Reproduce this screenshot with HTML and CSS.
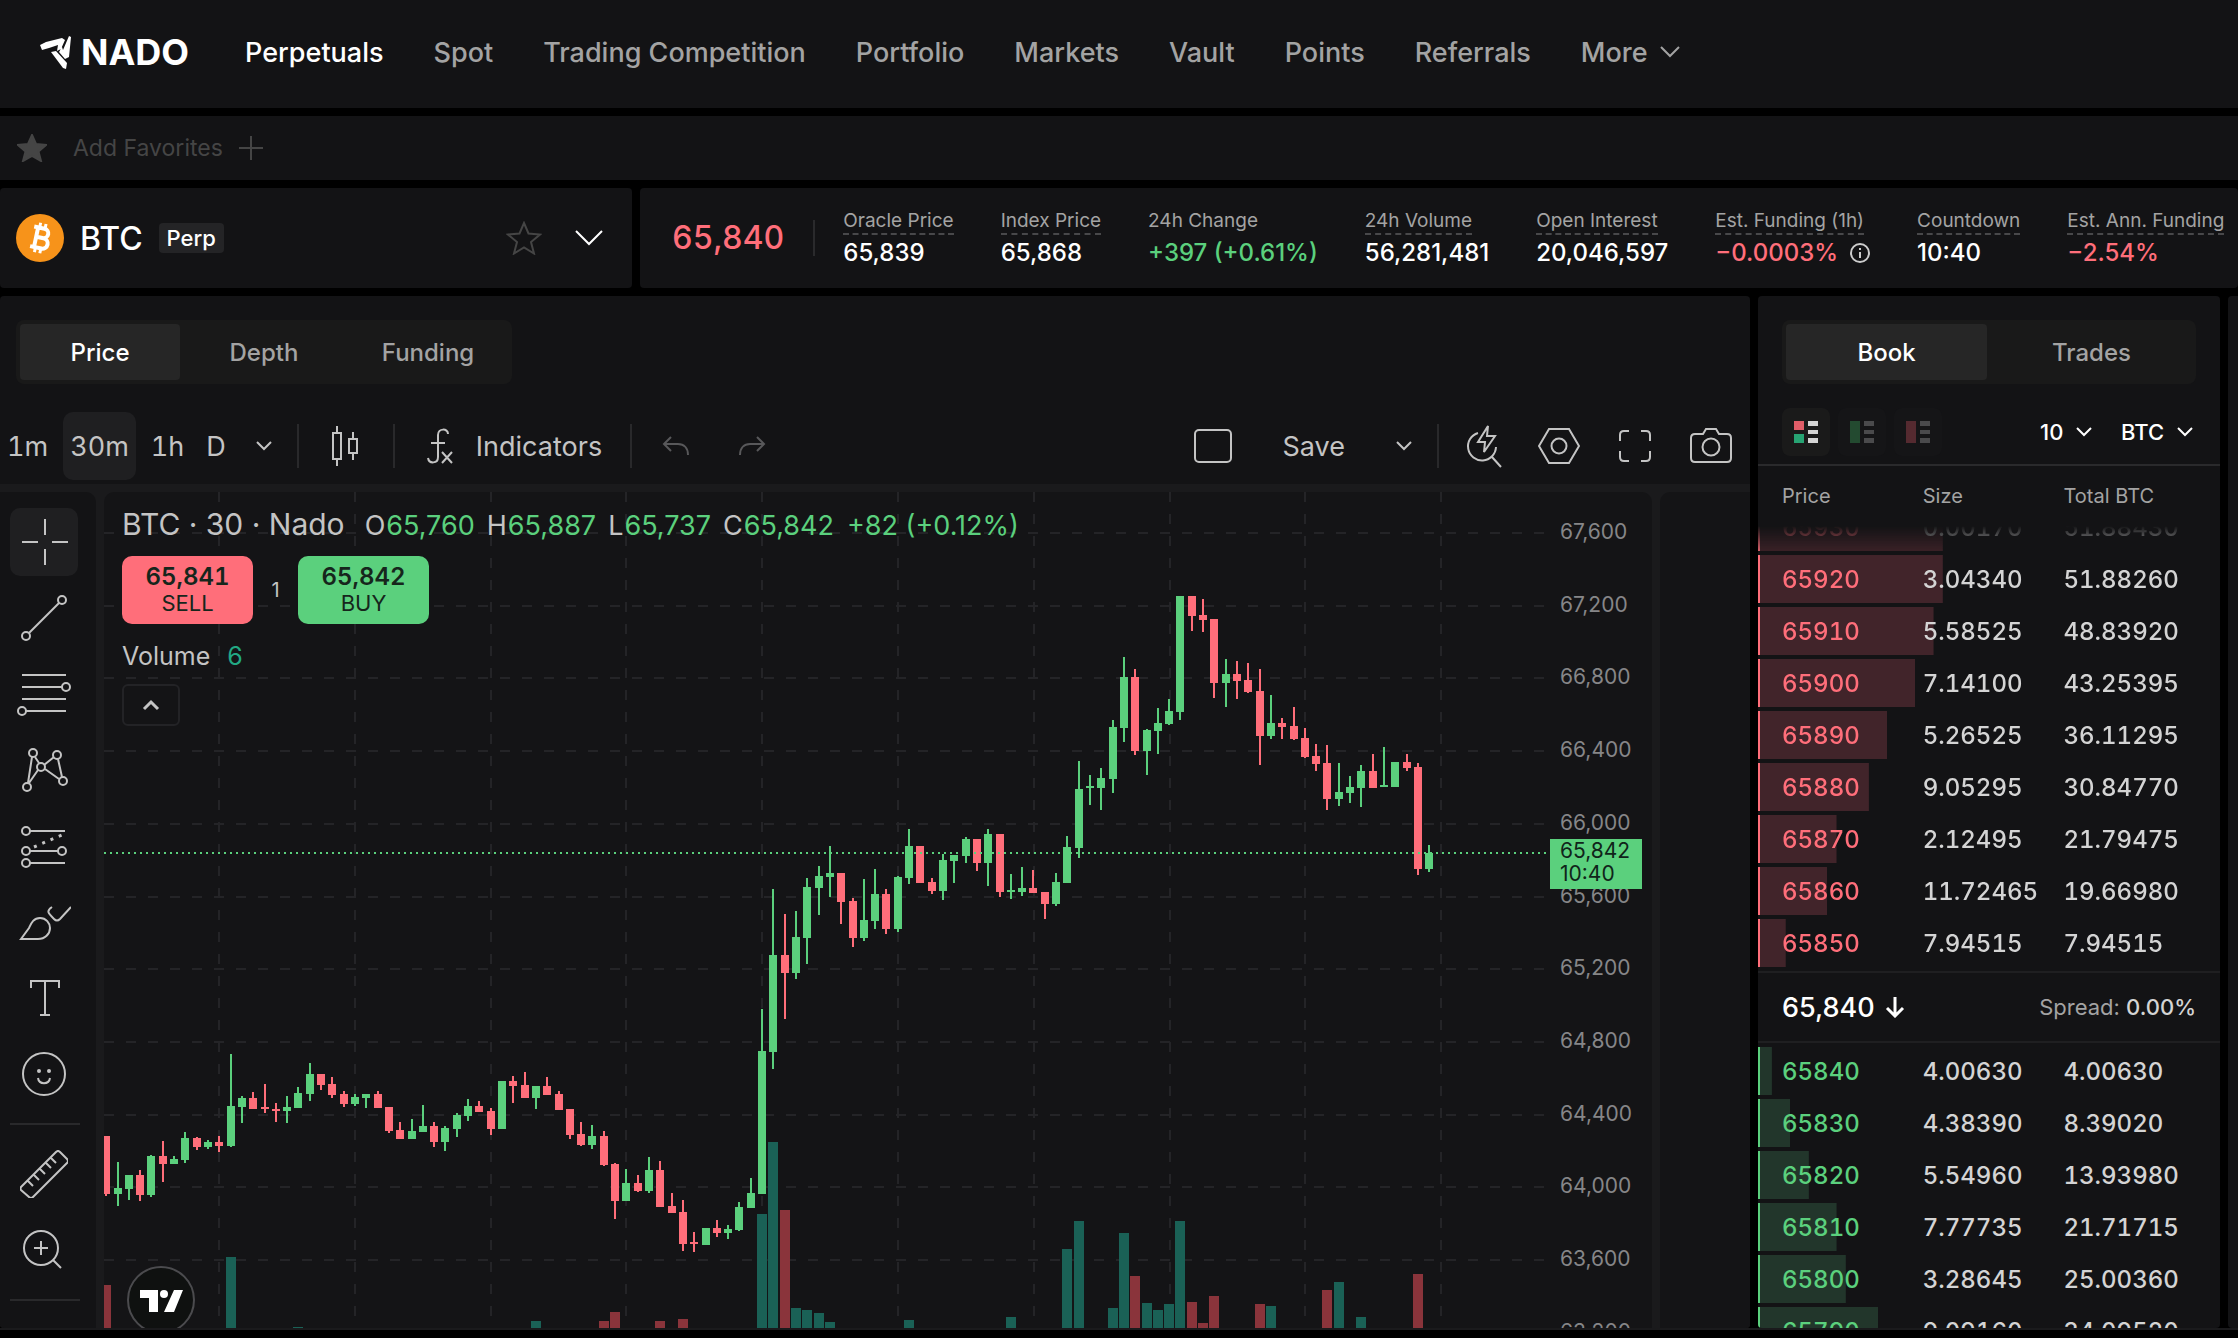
FILE: index.html
```html
<!DOCTYPE html>
<html lang="en">
<head>
  <meta charset="utf-8">
  <title>65,840 BTC-Perp | Nado</title>
  <link rel="stylesheet" href="styles.css">
</head>
<body>
  <header class="topbar">
    <a class="logo" href="#">
      <svg width="32" height="34" viewBox="0 0 32 34" fill="#fff"><path d="M0 10 6 7l16-4 3 2-4 9-4 2 1-6-9 3-7 2zM29 1l2 1-2 20-4 2-6-7 3-5 1 3zM11 17l5-1 11 12-1 6-3-1z"/></svg>
      <span>NADO</span>
    </a>
    <nav class="nav">
      <a class="active" href="#">Perpetuals</a>
      <a href="#">Spot</a>
      <a href="#">Trading Competition</a>
      <a href="#">Portfolio</a>
      <a href="#">Markets</a>
      <a href="#">Vault</a>
      <a href="#">Points</a>
      <a href="#">Referrals</a>
      <a href="#">More <svg width="20" height="12" viewBox="0 0 20 12"><path d="M1 1l9 9 9-9"/></svg></a>
    </nav>
  </header>

  <div class="favorites">
    <svg class="fav-star" width="30" height="28" viewBox="0 0 30 28"><path d="M15 1l4 9 10 1-7.500 6.500L24 27l-9-5-9 5 2.500-9.500L1 11l10-1z"/></svg>
    <button class="add-fav">Add Favorites <svg width="24" height="24" viewBox="0 0 24 24"><path d="M12 0v24M0 12h24"/></svg></button>
  </div>

  <section class="market">
    <div class="panel pair">
      <svg width="48" height="48" viewBox="0 0 48 48">
        <circle cx="24" cy="24" r="24" fill="#f7931a" stroke="none"/>
        <g transform="rotate(12 24 24)" fill="none" stroke="#fff" stroke-width="4"><path d="M16 14h10.500a4.500 4.500 0 0 1 0 9.500H20h7.500a5 5 0 0 1 0 10.500H16M20 14v20"/><path d="M21.500 9v5M27 9v5M21.500 34v5M27 34v5" stroke-width="3"/></g>
      </svg>
      <h1>BTC</h1>
      <span class="tag">Perp</span>
      <button class="icon-btn star" aria-label="Favorite"><svg width="36" height="34" viewBox="0 0 36 34"><path d="M18 2l4.500 10.500L34 13.500l-9 7.500 3 11.500-10-6-10 6 3-11.500-9-7.500 11.500-1z"/></svg></button>
      <button class="icon-btn" aria-label="Select market"><svg width="30" height="16" viewBox="0 0 30 16"><path d="M2 1l13 13L28 1" stroke="#fff"/></svg></button>
    </div>
    <div class="panel stats">
      <strong class="last red">65,840</strong>
      <dl>
        <div><dt><span>Oracle Price</span></dt><dd>65,839</dd></div>
        <div><dt><span>Index Price</span></dt><dd>65,868</dd></div>
        <div><dt>24h Change</dt><dd class="green">+397 (+0.61%)</dd></div>
        <div><dt><span>24h Volume</span></dt><dd>56,281,481</dd></div>
        <div><dt><span>Open Interest</span></dt><dd>20,046,597</dd></div>
        <div><dt><span>Est. Funding (1h)</span></dt><dd class="red">−0.0003% <svg width="20" height="20" viewBox="0 0 20 20"><circle cx="10" cy="10" r="9"/><path d="M10 9v6M10 5v2"/></svg></dd></div>
        <div><dt><span>Countdown</span></dt><dd>10:40</dd></div>
        <div><dt><span>Est. Ann. Funding</span></dt><dd class="red">−2.54%</dd></div>
      </dl>
    </div>
  </section>

  <main class="workspace">
    <section class="panel chart-panel">
      <div class="tabs chart-tabs">
        <button class="active">Price</button>
        <button>Depth</button>
        <button>Funding</button>
      </div>

      <div class="toolbar">
        <button class="interval">1m</button>
        <button class="interval active">30m</button>
        <button class="interval">1h</button>
        <button class="interval">D</button>
        <button class="arrow" aria-label="Intervals"><svg width="16" height="10" viewBox="0 0 16 10"><path d="M1 1l7 7 7-7"/></svg></button>
        <i class="sep"></i>
        <button class="candles" aria-label="Candles"><svg width="30" height="40" viewBox="0 0 30 40"><path d="M2 7h8v26H2zM6 0v7M6 33v7M18 13h8v14h-8zM22 6v7M22 27v7"/></svg></button>
        <i class="sep"></i>
        <button class="indicators"><svg width="30" height="36" viewBox="0 0 30 36"><path d="M23 6c0-6-10-6-10 1v22c0 7-9 7-10 1M6 15h14M17 24l10 11M27 24L17 35"/></svg>Indicators</button>
        <i class="sep"></i>
        <button class="tool dim" aria-label="Undo"><svg width="28" height="20" viewBox="0 0 28 20"><path d="M9 1L2 8l7 7M2 8h14c6 0 10 4 10 11"/></svg></button>
        <button class="tool dim" aria-label="Redo"><svg width="28" height="20" viewBox="0 0 28 20"><path d="M19 1l7 7-7 7M26 8H12C6 8 2 12 2 19"/></svg></button>
        <div class="toolbar-right">
          <button class="tool" aria-label="Layout"><svg width="40" height="36" viewBox="0 0 40 36"><rect x="2" y="2" width="36" height="32" rx="4"/></svg></button>
          <button class="save">Save</button>
          <button class="arrow" aria-label="Save menu"><svg width="16" height="10" viewBox="0 0 16 10"><path d="M1 1l7 7 7-7"/></svg></button>
          <i class="sep"></i>
          <button class="tool" aria-label="Quick search"><svg width="38" height="44" viewBox="0 0 38 44"><path d="M14 9a14 14 0 1 0 18 14M28 33l9 10M24 2L14 18h7l-1 10 11-16h-8z"/></svg></button>
          <button class="tool" aria-label="Settings"><svg width="42" height="38" viewBox="0 0 42 38"><path d="M11 2h20l10 17-10 17H11L1 19z"/><circle cx="21" cy="19" r="7.500"/></svg></button>
          <button class="tool" aria-label="Fullscreen"><svg width="34" height="34" viewBox="0 0 34 34"><path d="M2 12V6q0-4 4-4h5M23 2h5q4 0 4 4v6M32 22v6q0 4-4 4h-5M11 32H6q-4 0-4-4v-6"/></svg></button>
          <button class="tool" aria-label="Snapshot"><svg width="44" height="38" viewBox="0 0 44 38"><path d="M6 7h8l3-5h10l3 5h8q4 0 4 4v20q0 4-4 4H6q-4 0-4-4V11q0-4 4-4z"/><circle cx="22" cy="20" r="8.500"/></svg></button>
        </div>
      </div>

      <div class="chart-grid">
        <div class="draw-tools">
          <button class="tool active" aria-label="Cross"><svg width="48" height="48" viewBox="0 0 48 48"><path d="M25 1v16M25 31v16M2 24h16M32 24h16"/></svg></button>
          <button class="tool" aria-label="Trend line"><svg width="48" height="48" viewBox="0 0 48 48"><path d="M9 39L39 9"/><circle cx="6" cy="42" r="4"/><circle cx="42" cy="6" r="4"/></svg></button>
          <button class="tool" aria-label="Fib retracement"><svg width="54" height="48" viewBox="0 0 54 48"><path d="M5 5h44M5 17h40M5 29h44M9 41h40"/><circle cx="49" cy="17" r="4"/><circle cx="5" cy="41" r="4"/></svg></button>
          <button class="tool" aria-label="Patterns"><svg width="48" height="48" viewBox="0 0 48 48"><circle cx="13" cy="7" r="4"/><circle cx="37" cy="9" r="4"/><circle cx="21" cy="21" r="4"/><circle cx="7" cy="41" r="4"/><circle cx="43" cy="35" r="4"/><path d="M12 11L8 37M15 11l4 6M34 11L24 19M38 13l4 18M25 23l14 10M18 24L9 37"/></svg></button>
          <button class="tool" aria-label="Forecasting"><svg width="48" height="48" viewBox="0 0 48 48"><circle cx="6" cy="9" r="4"/><circle cx="6" cy="29" r="4"/><circle cx="42" cy="29" r="4"/><circle cx="6" cy="41" r="4"/><path d="M10 9h35M10 29h28M10 41h35"/><path d="M14 25L44 12" stroke-width="3" stroke-dasharray="3 6"/></svg></button>
          <button class="tool" aria-label="Brush"><svg width="54" height="48" viewBox="0 0 54 48"><path d="M4 41l8-11c2-4 4-10 11-10 6 0 10 5 10 10 0 6-5 11-12 11zM35 9c-6 4-4 6 2 12 2 2 4 2 6 0L54 9"/></svg></button>
          <button class="tool" aria-label="Text"><svg width="48" height="48" viewBox="0 0 48 48"><path d="M11 14V7h28v7M25 7v34M20 41h10"/></svg></button>
          <button class="tool" aria-label="Icons"><svg width="48" height="48" viewBox="0 0 48 48"><circle cx="24" cy="24" r="21"/><path d="M18 28c1 7 11 7 12 0"/><circle class="dot" cx="19" cy="21" r="2"/><circle class="dot" cx="29" cy="21" r="2"/></svg></button>
          <i class="line"></i>
          <button class="tool" aria-label="Measure"><svg width="48" height="48" viewBox="0 0 48 48"><path d="M1 37L36 2q2-2 4 0l7 7q2 2 0 4L13 47q-2 2-4 0l-8-7q-1-1 0-3zM8 31l5 5M14 25l5 5M20 19l5 5M26 13l5 5M31 8l5 5"/></svg></button>
          <button class="tool" aria-label="Zoom in"><svg width="48" height="48" viewBox="0 0 48 48"><circle cx="21" cy="22" r="17"/><path d="M14 22h14M21 15v14M33 34l8 8"/></svg></button>
          <i class="line"></i>
        </div>

        <div class="plot">
          <svg id="plot" class="plot-canvas"></svg>
          <svg id="axis" class="plot-axis"></svg>
          <div class="legend">
            <div class="legend-row">
              <h2>BTC · 30 · Nado</h2>
              <p>O<b>65,760</b></p><p>H<b>65,887</b></p><p>L<b>65,737</b></p><p>C<b>65,842</b></p><p><b>+82 (+0.12%)</b></p>
            </div>
            <div class="quick-trade">
              <button class="sell"><b>65,841</b>SELL</button>
              <span>1</span>
              <button class="buy"><b>65,842</b>BUY</button>
            </div>
            <p class="volume">Volume <b>6</b></p>
            <button class="collapse" aria-label="Collapse"><svg width="18" height="12" viewBox="0 0 18 12"><path d="M2 10l7-7 7 7"/></svg></button>
          </div>
          <svg class="tv" width="70" height="70" viewBox="0 0 70 70"><circle cx="35" cy="35" r="33"/><path d="M14 25h18v22h-9V33h-9zM48 25h9l-9 22H38z"/><circle class="dot" cx="38" cy="29" r="4"/></svg>
        </div>
        <div class="side"></div>
      </div>
    </section>

    <section class="panel book">
      <div class="tabs">
        <button class="active">Book</button>
        <button>Trades</button>
      </div>
      <div class="book-controls">
        <button class="view active" aria-label="Both sides"><svg width="24" height="24" viewBox="0 0 24 24"><path d="M0 1h10v9H0z" fill="#e05d68"/><path d="M0 14h10v9H0z" fill="#27a373"/><path class="bars" d="M14 1h10v5H14zM14 10h10v4H14zM14 18h10v5H14z"/></svg></button>
        <button class="view" aria-label="Bids"><svg width="24" height="24" viewBox="0 0 24 24"><path d="M0 1h10v22H0z" fill="#234a30"/><path class="bars" d="M14 1h10v5H14zM14 10h10v4H14zM14 18h10v5H14z"/></svg></button>
        <button class="view" aria-label="Asks"><svg width="24" height="24" viewBox="0 0 24 24"><path d="M0 1h10v22H0z" fill="#552a30"/><path class="bars" d="M14 1h10v5H14zM14 10h10v4H14zM14 18h10v5H14z"/></svg></button>
        <label class="pick step"><select aria-label="Price step"><option>10</option></select><svg width="16" height="10" viewBox="0 0 16 10"><path d="M1 1l7 7 7-7"/></svg></label>
        <label class="pick"><select aria-label="Unit"><option>BTC</option></select><svg width="16" height="10" viewBox="0 0 16 10"><path d="M1 1l7 7 7-7"/></svg></label>
      </div>
      <table>
        <thead><tr><th>Price</th><th>Size</th><th>Total BTC</th></tr></thead>
        <tbody class="asks">
          <tr style="--depth:40%"><td>65930</td><td>0.00170</td><td>51.88430</td></tr>
          <tr style="--depth:40%"><td>65920</td><td>3.04340</td><td>51.88260</td></tr>
          <tr style="--depth:38%"><td>65910</td><td>5.58525</td><td>48.83920</td></tr>
          <tr style="--depth:34%"><td>65900</td><td>7.14100</td><td>43.25395</td></tr>
          <tr style="--depth:28%"><td>65890</td><td>5.26525</td><td>36.11295</td></tr>
          <tr style="--depth:24%"><td>65880</td><td>9.05295</td><td>30.84770</td></tr>
          <tr style="--depth:17%"><td>65870</td><td>2.12495</td><td>21.79475</td></tr>
          <tr style="--depth:15%"><td>65860</td><td>11.72465</td><td>19.66980</td></tr>
          <tr style="--depth:6%"><td>65850</td><td>7.94515</td><td>7.94515</td></tr>
        </tbody>
        <tbody class="spread">
          <tr><td>65,840 <svg width="20" height="22" viewBox="0 0 20 22"><path d="M10 1v19M2 12l8 8 8-8"/></svg></td><td>Spread: <b>0.00%</b></td></tr>
        </tbody>
        <tbody class="bids">
          <tr style="--depth:3%"><td>65840</td><td>4.00630</td><td>4.00630</td></tr>
          <tr style="--depth:7%"><td>65830</td><td>4.38390</td><td>8.39020</td></tr>
          <tr style="--depth:11%"><td>65820</td><td>5.54960</td><td>13.93980</td></tr>
          <tr style="--depth:17%"><td>65810</td><td>7.77735</td><td>21.71715</td></tr>
          <tr style="--depth:19%"><td>65800</td><td>3.28645</td><td>25.00360</td></tr>
          <tr style="--depth:26%"><td>65790</td><td>9.09160</td><td>34.09520</td></tr>
        </tbody>
      </table>
    </section>
    <aside class="panel order"></aside>
  </main>
  <script src="chart.js"></script>
</body>
</html>
```
FILE: styles.css
```css
* {
  box-sizing: border-box;
}

body {
  margin: 0;
  height: 100vh;
  display: flex;
  flex-direction: column;
  gap: 8px;
  padding-bottom: 8px;
  overflow: hidden;
  background: #000;
  color: #fff;
  font-family: Inter, "Liberation Sans", sans-serif;
  font-size: 24px;
}

h1, h2, p, dl, dd {
  margin: 0;
  font-weight: 400;
}

a {
  color: inherit;
  text-decoration: none;
}

button, select {
  border: none;
  padding: 0;
  background: none;
  color: inherit;
  font: inherit;
  cursor: pointer;
}

svg {
  flex: none;
  fill: none;
  stroke: currentColor;
  stroke-width: 2;
}

.panel {
  background: #131315;
  border-radius: 4px;
}

.red {
  color: #ff6e7a;
}

.green {
  color: #5bd07d;
}

/* Header */
.topbar {
  display: flex;
  align-items: center;
  gap: 56px;
  height: 108px;
  padding: 0 40px 4px;
  background: #131315;
}

.logo {
  display: flex;
  align-items: center;
  gap: 9px;
  font-size: 36px;
  font-weight: 700;
}

.logo svg {
  fill: #fff;
  stroke: none;
}

.nav {
  display: flex;
  gap: 50px;
  font-size: 27px;
  font-weight: 500;
  color: #a3a3a3;
}

.nav a {
  display: flex;
  align-items: center;
  gap: 12px;
}

.nav .active {
  color: #fff;
}

.favorites {
  display: flex;
  align-items: center;
  gap: 26px;
  height: 64px;
  padding: 0 17px;
  background: #131315;
  color: #454545;
}

.fav-star {
  fill: #454545;
}

.add-fav {
  display: flex;
  align-items: center;
  gap: 16px;
  font-size: 23px;
}

/* Market summary */
.market {
  display: flex;
  gap: 8px;
  height: 100px;
}

.pair {
  display: flex;
  align-items: center;
  gap: 16px;
  width: 632px;
  padding: 0 28px 0 16px;
}

.pair h1 {
  font-size: 32px;
  font-weight: 500;
}

.tag {
  padding: 0 8px;
  border-radius: 4px;
  background: #242426;
  font-size: 22px;
  font-weight: 500;
  line-height: 30px;
}

.icon-btn {
  display: flex;
}

.icon-btn.star {
  margin-left: auto;
  margin-right: 16px;
  color: #454545;
}

.stats {
  flex: 1;
  display: flex;
  align-items: center;
  padding-left: 32px;
  overflow: hidden;
  white-space: nowrap;
}

.last {
  padding-right: 29px;
  border-right: 2px solid #2a2a2c;
  font-size: 32px;
  font-weight: 500;
  font-variant-numeric: tabular-nums;
  line-height: 36px;
}

.stats dl {
  display: flex;
  gap: 47px;
  padding-left: 28px;
}

.stats dt {
  height: 26px;
  margin-bottom: 4px;
  font-size: 19px;
  line-height: 24px;
  color: #a3a3a3;
}

.stats dt span {
  display: block;
  width: max-content;
  border-bottom: 2px dashed #48484a;
}

.stats dd {
  display: flex;
  align-items: center;
  gap: 12px;
  font-weight: 500;
  line-height: 28px;
}

.stats dd svg {
  color: #ccc;
}

/* Workspace */
.workspace {
  flex: 1;
  min-height: 0;
  display: flex;
  gap: 8px;
  border-bottom: 2px solid #1a1a1c;
}

.chart-panel {
  flex: 1;
  min-width: 0;
  display: flex;
  flex-direction: column;
  overflow: hidden;
}

.tabs {
  display: flex;
  gap: 4px;
  height: 64px;
  padding: 4px;
  border-radius: 8px;
  background: #191919;
  font-weight: 500;
  color: #a3a3a3;
}

.tabs button {
  flex: 1;
  border-radius: 4px;
}

.tabs .active {
  background: #262626;
  color: #fff;
}

.chart-tabs {
  width: 496px;
  flex: none;
  margin: 24px 16px 28px;
}

.toolbar {
  display: flex;
  align-items: center;
  gap: 8px;
  flex: none;
  height: 72px;
  padding: 0 5px 4px 0;
  font-size: 27px;
  font-variant-numeric: tabular-nums;
  color: #c4c4c4;
}

.toolbar button {
  display: flex;
  align-items: center;
  justify-content: center;
  height: 68px;
  border-radius: 10px;
}

.toolbar .interval {
  padding: 0 7px;
}

.toolbar .active {
  background: #1f1f21;
}

.toolbar .arrow {
  width: 46px;
}

.toolbar .candles {
  width: 74px;
}

.toolbar .indicators {
  gap: 21px;
  padding: 0 18px 0 20px;
}

.toolbar .save {
  padding: 0 28px;
}

.toolbar .dim {
  color: #58585a;
}

.sep {
  width: 2px;
  height: 44px;
  margin: 0 2px;
  background: #29292b;
}

.tool {
  width: 68px;
  height: 68px;
}

.toolbar-right {
  display: flex;
  align-items: center;
  gap: 8px;
  margin-left: auto;
}

.chart-grid {
  flex: 1;
  min-height: 0;
  display: flex;
  gap: 8px;
  padding-top: 8px;
  background: #1a1a1c;
}

.draw-tools {
  display: flex;
  flex-direction: column;
  gap: 8px;
  width: 96px;
  padding: 16px 10px;
  border-top-right-radius: 10px;
  background: #131315;
  color: #c4c4c4;
}

.draw-tools .tool {
  display: flex;
  flex: none;
  align-items: center;
  justify-content: center;
  border-radius: 10px;
}

.draw-tools .active {
  background: #1f1f21;
}

.draw-tools .line {
  flex: none;
  width: 70px;
  height: 2px;
  margin: 7px 0;
  background: #29292b;
}

.dot {
  fill: currentColor;
  stroke: none;
}

.plot {
  position: relative;
  flex: 1;
  min-width: 0;
  display: flex;
  overflow: hidden;
  border-radius: 10px 10px 0 0;
  background: #141416;
}

.plot-canvas {
  flex: 1;
  min-width: 0;
  height: 100%;
  stroke: none;
}

.plot-axis {
  width: 106px;
  height: 100%;
  stroke: none;
  font-size: 21px;
}

.side {
  width: 90px;
  border-top-left-radius: 10px;
  background: #141416;
}

.grid-line {
  stroke: #242427;
  stroke-dasharray: 10 12;
}

.last-line {
  stroke: #5bd07d;
  stroke-dasharray: 2 4;
}

.up {
  fill: #5bd07d;
}

.down {
  fill: #ff6e7a;
}

.vol-up {
  fill: #1a6156;
}

.vol-down {
  fill: #8a343b;
}

.axis-label {
  fill: #868688;
}

.axis-last {
  fill: #10241a;
}

/* Legend sits over the plot */
.legend {
  position: absolute;
  top: 12px;
  left: 18px;
  color: #c4c4c4;
}

.legend b {
  font-weight: 400;
  color: #5bd07d;
}

.legend-row {
  display: flex;
  align-items: baseline;
  gap: 12px;
  height: 52px;
  font-size: 27px;
}

.legend h2 {
  margin-right: 8px;
  font-size: 30px;
  line-height: 40px;
}

.legend-row b {
  margin-left: 1px;
}

.quick-trade {
  display: flex;
  align-items: center;
  font-size: 20px;
}

.quick-trade span {
  width: 45px;
  text-align: center;
}

.quick-trade button {
  width: 131px;
  height: 68px;
  border-radius: 10px;
  color: #16261c;
  font-size: 22px;
  line-height: 27px;
}

.quick-trade .sell {
  background: #ff6e7a;
}

.quick-trade .buy {
  background: #5bd07d;
}

.quick-trade b {
  display: block;
  color: inherit;
  font-size: 24px;
  font-weight: 600;
  font-variant-numeric: tabular-nums;
}

.legend .volume {
  margin: 17px 0 13px;
  font-size: 25px;
  line-height: 30px;
}

.legend .volume b {
  margin-left: 10px;
  color: #22a884;
}

.collapse {
  display: flex;
  align-items: center;
  justify-content: center;
  width: 58px;
  height: 42px;
  border: 2px solid #232326;
  border-radius: 6px;
}

.collapse svg {
  stroke-width: 3;
}

.tv {
  position: absolute;
  left: 22px;
  bottom: -7px;
  fill: #fff;
  stroke: none;
  color: #fff;
}

.tv circle:first-child {
  fill: #0f1110;
  stroke: #4b4b4e;
}

/* Order book */
.book {
  width: 462px;
  display: flex;
  flex-direction: column;
  overflow: hidden;
}

.book .tabs {
  flex: none;
  margin: 24px;
}

.book-controls {
  display: flex;
  gap: 8px;
  flex: none;
  height: 58px;
  padding: 0 24px;
  border-bottom: 2px solid #2a2a2c;
}

.view {
  display: flex;
  align-items: center;
  justify-content: center;
  width: 48px;
  height: 48px;
  border-radius: 8px;
  background: #151517;
}

.view.active {
  background: #1a1a1a;
}

.view svg {
  stroke: none;
}

.bars {
  fill: #4a4a4c;
}

.view.active .bars {
  fill: #d4d4d4;
}

.pick {
  display: flex;
  align-items: center;
  gap: 12px;
  height: 48px;
  margin-left: 18px;
  padding-right: 3px;
}

.pick.step {
  margin-left: auto;
}

.pick select {
  appearance: none;
  font-size: 22px;
  font-weight: 500;
}

.book table {
  flex: 1;
  min-height: 0;
  display: flex;
  flex-direction: column;
}

.book tr {
  display: grid;
  grid-template-columns: 34% 34% 1fr;
  flex: none;
  align-items: center;
  height: 48px;
  padding: 0 24px;
}

.book thead tr {
  height: 60px;
}

.book th, .book td {
  padding: 0;
}

.book th {
  text-align: left;
  font-size: 20px;
  font-weight: 400;
  color: #a3a3a3;
}

.asks, .bids {
  display: flex;
  flex-direction: column;
  gap: 4px;
  overflow: hidden;
  font-weight: 500;
  font-variant-numeric: tabular-nums;
  color: #d4d4d4;
}

.asks {
  flex: none;
  height: 445px;
  justify-content: flex-end;
  padding-bottom: 4px;
  mask-image: linear-gradient(transparent, #000 30px);
}

.bids {
  flex: 1;
  padding-top: 4px;
}

.asks tr {
  background: linear-gradient(#ff6e7a, #ff6e7a) left / 2px 100% no-repeat,
    linear-gradient(#41242a, #41242a) left / var(--depth) 100% no-repeat;
}

.bids tr {
  background: linear-gradient(#5bd07d, #5bd07d) left / 2px 100% no-repeat,
    linear-gradient(#22362b, #22362b) left / var(--depth) 100% no-repeat;
}

.asks td:first-child {
  color: #ff6e7a;
}

.bids td:first-child {
  color: #5bd07d;
}

.book .spread tr {
  display: flex;
  justify-content: space-between;
  height: 72px;
  border-top: 2px solid #1f1f21;
  border-bottom: 2px solid #1f1f21;
  font-size: 22px;
  color: #a3a3a3;
}

.spread td:first-child {
  display: flex;
  align-items: center;
  gap: 10px;
  font-size: 27px;
  font-weight: 500;
  color: #fff;
}

.spread svg {
  stroke-width: 3;
}

.spread b {
  font-weight: 500;
  color: #d4d4d4;
}

.order {
  width: 10px;
  border-radius: 4px 0 0 4px;
}
```
FILE: chart.js
```js
// direction, high, body top, body bottom, low
const candles = [
  ['d',644,644,702,704],['u',670,696,702,714],['u',683,683,697,708],['d',678,683,703,709],['u',663,664,703,705],
  ['d',649,664,672,690],['u',664,667,672,672],['u',640,646,668,671],['d',645,646,655,658],['u',648,650,655,657],
  ['d',644,650,654,660],['u',562,614,654,655],['u',604,606,615,631],['d',600,606,617,617],['d',592,615,617,621],
  ['d',611,617,619,630],['u',604,615,619,631],['u',595,601,616,616],['u',571,582,602,609],['d',582,582,593,598],
  ['d',585,592,603,606],['d',599,602,612,615],['u',602,605,612,614],['u',602,602,606,616],['d',599,602,616,616],
  ['d',615,615,639,641],['d',630,638,647,647],['u',627,639,647,647],['u',613,634,640,640],['d',630,634,650,655],
  ['u',634,636,650,659],['u',621,623,637,645],['u',607,614,624,629],['d',609,614,620,620],['d',616,619,637,643],
  ['u',589,589,637,637],['d',584,589,594,611],['d',580,593,606,606],['u',594,594,606,617],['d',585,594,603,603],
  ['d',599,602,618,618],['d',617,617,643,647],['d',630,642,653,654],['u',633,644,653,657],['d',639,644,673,674],
  ['d',671,672,709,727],['u',677,691,709,709],['d',683,691,699,700],['u',665,678,699,701],['d',669,678,715,715],
  ['d',701,714,721,721],['d',708,720,752,759],['d',740,750,752,760],['u',736,736,753,753],['d',728,736,741,745],
  ['u',733,737,741,747],['u',710,715,738,739],['u',686,701,716,716],['u',517,559,702,702],['u',397,463,560,577],
  ['d',422,463,481,527],['u',419,445,481,487],['u',386,395,446,472],['u',374,384,396,423],['u',354,381,385,405],
  ['d',381,381,410,432],['d',406,409,446,455],['u',387,428,446,449],['u',377,402,429,437],['d',397,402,437,442],
  ['u',384,385,437,440],['u',337,354,386,392],['d',354,354,391,391],['d',386,390,399,402],['u',362,368,399,408],
  ['u',363,363,369,391],['u',345,347,364,371],['d',347,347,371,379],['u',337,342,371,394],['d',342,342,400,405],
  ['u',382,398,400,407],['u',375,396,400,404],['d',378,396,401,401],['d',400,400,412,427],['u',381,390,412,414],
  ['u',344,355,391,391],['u',269,297,356,366],['u',283,294,296,313],['u',276,286,296,318],['u',228,235,287,301],
  ['u',165,185,236,250],['d',177,185,259,263],['u',237,238,259,283],['u',216,231,239,262],['u',207,219,232,233],
  ['u',104,104,220,228],['d',104,104,124,139],['d',107,123,128,140],['d',127,127,191,206],['u',167,182,191,215],
  ['d',169,182,189,207],['d',171,188,200,201],['d',177,199,244,273],['u',203,231,244,247],['d',226,231,235,247],
  ['d',215,234,247,248],['d',236,246,265,266],['d',252,264,272,279],['d',253,271,307,318],['u',271,300,307,314],
  ['u',284,295,301,311],['u',273,279,296,315],['d',262,279,296,296],['u',255,293,295,295],['u',270,270,295,295],
  ['d',262,270,276,279],['d',271,275,377,383],['u',353,361,377,380]
];

// candle index: bar height
const volumes = {
  0: 43, 11: 71, 17: 1, 38: 7, 44: 7, 45: 16, 49: 7, 51: 9, 58: 114, 59: 186, 60: 118, 61: 20, 62: 18, 63: 15, 64: 6,
  71: 8, 80: 11, 85: 79, 86: 107, 89: 20, 90: 95, 91: 52, 92: 25, 93: 18, 94: 24, 95: 107, 96: 26, 97: 5, 98: 32,
  102: 24, 103: 22, 108: 38, 109: 46, 111: 11, 116: 54
};

const plot = document.getElementById('plot');
const axis = document.getElementById('axis');
const height = plot.clientHeight;
const step = 11.308;
const lastY = 361;

function rect(cls, x, y, w, h) {
  return `<rect class="${cls}" x="${x}" y="${y}" width="${w}" height="${h}"/>`;
}

let out = '';
let labels = '';

for (let i = 0; i < 12; i++) {
  const y = Math.round(41 + i * 72.7);
  const price = (67600 - i * 400).toLocaleString('en-US');
  if (y < height) out += `<line class="grid-line" x1="0" x2="100%" y1="${y}" y2="${y}"/>`;
  labels += `<text class="axis-label" x="14" y="${y + 6}">${price}</text>`;
}
for (let i = 0; i < 10; i++) {
  const x = Math.round(115 + i * 135.8);
  out += `<line class="grid-line" x1="${x}" x2="${x}" y1="0" y2="${height - 10}"/>`;
}

candles.forEach(([dir, high, top, bottom, low], i) => {
  const x = Math.round(2.2 + i * step);
  const cls = dir === 'u' ? 'up' : 'down';
  if (volumes[i]) out += rect('vol-' + cls, x - 5, height - volumes[i], 10, volumes[i]);
  out += rect(cls, x - 1, high, 2, low - high);
  out += rect(cls, x - 4, top, 8, bottom - top);
});

out += `<line class="last-line" x1="0" x2="100%" y1="${lastY}" y2="${lastY}"/>`;
labels += rect('up', 4, 347, 92, 50);
labels += '<text class="axis-last" x="14" y="366">65,842</text><text class="axis-last" x="14" y="389">10:40</text>';

plot.innerHTML = out;
axis.innerHTML = labels;
```
